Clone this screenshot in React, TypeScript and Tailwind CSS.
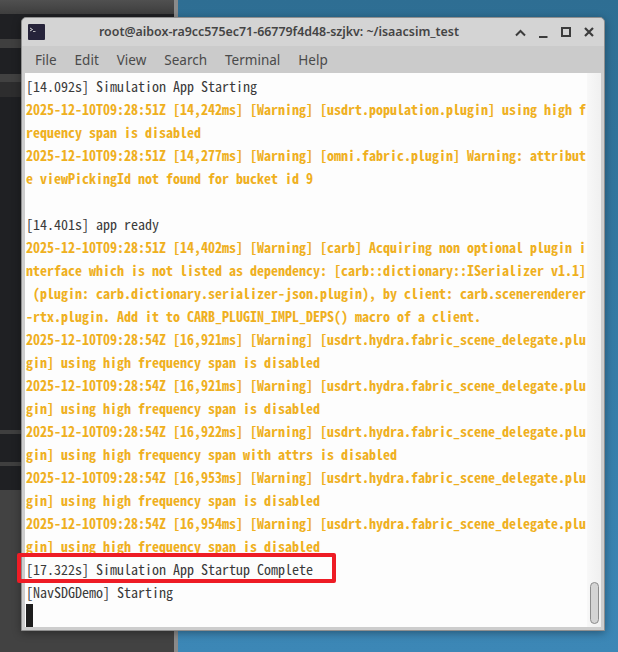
const grey = 'text-[#3a3a3a]'
const amber = 'text-[#efb01f] font-bold'

const lines: [string, string][] = [
  ['[14.092s] Simulation App Starting', grey],
  ['2025-12-10T09:28:51Z [14,242ms] [Warning] [usdrt.population.plugin] using high f', amber],
  ['requency span is disabled', amber],
  ['2025-12-10T09:28:51Z [14,277ms] [Warning] [omni.fabric.plugin] Warning: attribut', amber],
  ['e viewPickingId not found for bucket id 9', amber],
  ['\u00a0', grey],
  ['[14.401s] app ready', grey],
  ['2025-12-10T09:28:51Z [14,402ms] [Warning] [carb] Acquiring non optional plugin i', amber],
  ['nterface which is not listed as dependency: [carb::dictionary::ISerializer v1.1]', amber],
  [' (plugin: carb.dictionary.serializer-json.plugin), by client: carb.scenerenderer', amber],
  ['-rtx.plugin. Add it to CARB_PLUGIN_IMPL_DEPS() macro of a client.', amber],
  ['2025-12-10T09:28:54Z [16,921ms] [Warning] [usdrt.hydra.fabric_scene_delegate.plu', amber],
  ['gin] using high frequency span is disabled', amber],
  ['2025-12-10T09:28:54Z [16,921ms] [Warning] [usdrt.hydra.fabric_scene_delegate.plu', amber],
  ['gin] using high frequency span is disabled', amber],
  ['2025-12-10T09:28:54Z [16,922ms] [Warning] [usdrt.hydra.fabric_scene_delegate.plu', amber],
  ['gin] using high frequency span with attrs is disabled', amber],
  ['2025-12-10T09:28:54Z [16,953ms] [Warning] [usdrt.hydra.fabric_scene_delegate.plu', amber],
  ['gin] using high frequency span is disabled', amber],
  ['2025-12-10T09:28:54Z [16,954ms] [Warning] [usdrt.hydra.fabric_scene_delegate.plu', amber],
  ['gin] using high frequency span is disabled', amber],
  ['[17.322s] Simulation App Startup Complete', grey],
  ['[NavSDGDemo] Starting', grey],
]

const menus = ['File', 'Edit', 'View', 'Search', 'Terminal', 'Help']

const TerminalIcon = () => (
  <svg width="17" height="17" viewBox="0 0 17 17" className="shrink-0">
    <rect x="0" y="0" width="17" height="16" rx="1" fill="#26233a" />
    <path d="M2 4l2.5 1.5L2 7" stroke="#e8e8e8" strokeWidth="0.9" fill="none" />
    <path d="M5 7.5h2.5" stroke="#c8c8c8" strokeWidth="0.9" />
  </svg>
)

const WindowButtons = () => (
  <svg width="80" height="14" viewBox="0 0 80 14" className="shrink-0">
    <path d="M1 10.5l4.5-4.5 4.5 4.5" stroke="#3c3c3c" strokeWidth="2" fill="none" />
    <path d="M24 12h8.5" stroke="#3c3c3c" strokeWidth="2" fill="none" />
    <rect x="47" y="3" width="8" height="8" stroke="#3c3c3c" strokeWidth="2" fill="none" />
    <path d="M70 3l8 8M78 3l-8 8" stroke="#3c3c3c" strokeWidth="2.2" fill="none" />
  </svg>
)

export default function App() {
  return (
    <div className="relative w-[618px] h-[652px] overflow-hidden bg-gradient-to-b from-[#2e6e93] to-[#3c87b6] font-['Noto_Sans',sans-serif]">
      {/* stuff behind the terminal */}
      <div className="absolute left-0 top-0 w-[178px] h-[652px] flex flex-col bg-[#1f2023] border-r-4 border-[#8a8a8a]">
        <div className="h-[14px] bg-gradient-to-b from-[#505050] to-[#3e3e3e]" />
        <div className="mt-[25px] h-[9px] bg-[#3f3f3f]" />
        <div className="mt-[26px] h-[8px] bg-[#414141]" />
        <div className="h-[15px] bg-[#2d2d2e]" />
        <div className="mt-[333px] h-[4px] bg-[#3f3f3f]" />
        <div className="mt-[28px] h-[4px] bg-[#3f3f3f]" />
        <div className="mt-[24px] flex-1 bg-[#424242]" />
      </div>

      {/* terminal window */}
      <div className="absolute left-[21px] top-[17px] w-[584px] h-[614px] flex flex-col rounded-t-[5px] border border-[#8f8f8f] bg-[#cdcdcd] shadow-[0_2px_8px_rgba(0,0,0,0.35)]">
        <div className="h-[28px] flex items-center pl-[6px] pr-[9px] bg-[#d4d4d4] rounded-t-[5px]">
          <TerminalIcon />
          <div className="flex-1 text-center text-[12.4px] font-semibold text-[#444444] leading-none pr-[2px]">
            root@aibox-ra9cc575ec71-66779f4d48-szjkv: ~/isaacsim_test
          </div>
          <WindowButtons />
        </div>
        <div className="h-[27px] flex items-center pl-[13px] pt-[1px] gap-[18px] bg-[#cbcbcb] text-[13.5px] text-[#4a4a4a]">
          {menus.map((m) => (
            <span key={m}>{m}</span>
          ))}
        </div>
        <div className="flex-1 flex mx-[3px] mb-[3px] bg-[#fdfdfd] overflow-hidden">
          <div className="relative flex-1 pl-[1px] pt-[2px] overflow-hidden font-['Noto_Sans_Mono_CJK_SC','Liberation_Mono',monospace] text-[14px] leading-[23px]">
            {lines.map((l, i) => (
              <div key={i} className={`${l[1]} whitespace-pre h-[23px]`}>
                {l[0]}
              </div>
            ))}
            <div className="w-[7px] h-[23px] bg-[#1e1e1e]" />
          </div>
          <div className="w-[14px] shrink-0 flex flex-col justify-end items-center pb-[3px] bg-gradient-to-r from-[#f8f8f8] to-[#f0f0f0]">
            <div className="w-[9px] h-[42px] rounded-full bg-[#d4d4d4] border border-[#8c8c8c]" />
          </div>
        </div>
      </div>

      {/* red annotation box */}
      <div className="absolute left-[17px] top-[553px] w-[319px] h-[30px] rounded-[2px] border-[4px] border-[#ee1c25]" />
    </div>
  )
}
